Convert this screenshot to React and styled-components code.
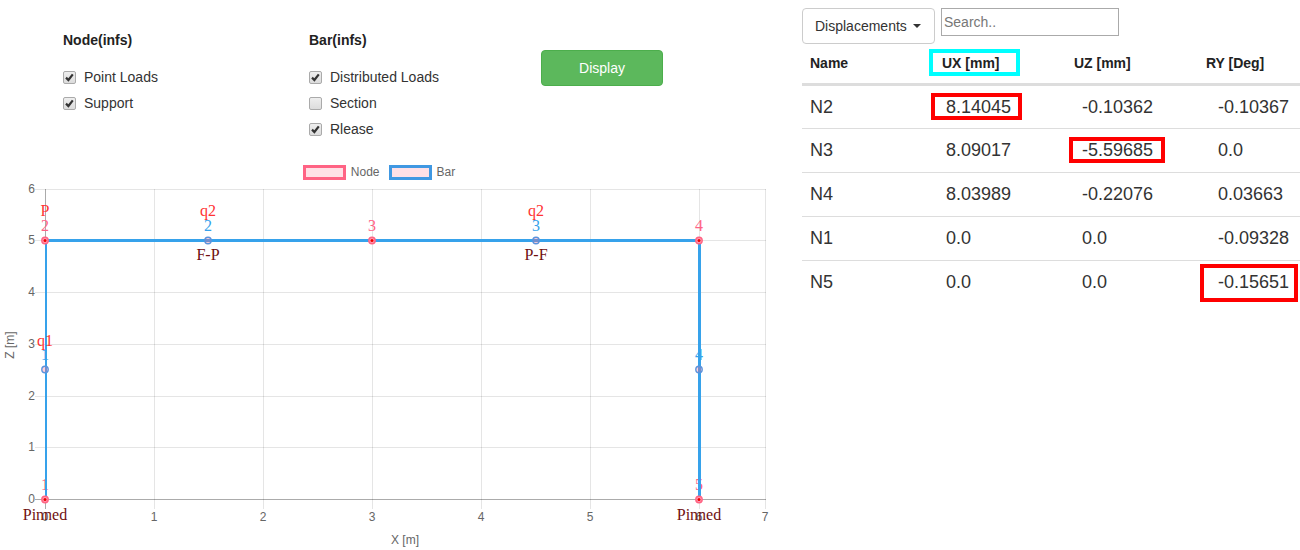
import React, { useState } from "react";
import styled, { createGlobalStyle } from "styled-components";

const GlobalStyle = createGlobalStyle`
  *, *::before, *::after { box-sizing: border-box; }
  body {
    margin: 0;
    background: #fff;
    color: #333;
    font: 14px/20px "Liberation Sans", Arial, sans-serif;
  }
`;

const Page = styled.main`
  display: grid;
  grid-template-columns: minmax(0, 770fr) minmax(0, 498fr);
  column-gap: 32px;
`;

const ModelPanel = styled.section`
  display: flex;
  flex-direction: column;
`;

const Options = styled.form`
  display: grid;
  grid-template-columns: 246fr 232fr 229fr;
  align-items: start;
  padding: 30px 0 20px 63px;
`;

const Group = styled.fieldset`
  display: flex;
  flex-direction: column;
  min-width: 0;
  margin: 0;
  padding: 0;
  border: 0;
`;

const GroupTitle = styled.legend`
  padding: 0;
  margin-bottom: 14px;
  font-weight: bold;
  color: #222;
`;

const Option = styled.label`
  display: grid;
  grid-template-columns: 13px 1fr;
  column-gap: 8px;
  align-items: center;
  line-height: 26px;
`;

const Tick = styled.svg`
  grid-area: 1 / 1;
  width: 13px;
  height: 13px;
  pointer-events: none;
  visibility: hidden;
`;

const Box = styled.input`
  grid-area: 1 / 1;
  appearance: none;
  width: 13px;
  height: 13px;
  margin: 0;
  border: 1px solid #aaa;
  border-radius: 2px;
  background: linear-gradient(#eee, #dcdcdc);

  &:checked + ${Tick} { visibility: visible; }
`;

const DisplayButton = styled.button`
  justify-self: start;
  width: 122px;
  height: 36px;
  margin-top: 20px;
  border: 1px solid #4cae4c;
  border-radius: 4px;
  background: #5cb85c;
  color: #fff;
  font: inherit;
  cursor: pointer;
`;

const Legend = styled.div`
  display: flex;
  justify-content: center;
  gap: 9px;
  padding-right: 12px;
  font-size: 12px;
  color: #666;
`;

const LegendItem = styled.span`
  display: flex;
  align-items: center;
  gap: 5px;
`;

const Swatch = styled.i`
  width: 43px;
  height: 15px;
  border: 3px solid ${(p) => p.$color};
  background: #ffe0e6;
`;

const Chart = styled.svg`
  display: block;
  width: 100%;
  height: auto;
`;

const AxisText = styled.text`
  font: 12px "Liberation Sans", Arial, sans-serif;
  fill: #666;
  text-anchor: ${(p) => p.$anchor || "middle"};
`;

const Mark = styled.text`
  font: 16px "Liberation Serif", "Times New Roman", serif;
  fill: ${(p) => p.$color};
  text-anchor: middle;
`;

const ResultPanel = styled.section`
  display: flex;
  flex-direction: column;
`;

const Toolbar = styled.div`
  display: flex;
  align-items: flex-start;
  gap: 6px;
  padding-top: 8px;
`;

const Picker = styled.div`
  display: grid;
  align-items: center;
  width: 133px;
  height: 36px;
`;

const Select = styled.select`
  grid-area: 1 / 1;
  appearance: none;
  width: 100%;
  height: 36px;
  padding: 0 12px;
  border: 1px solid #ccc;
  border-radius: 4px;
  background: #fff;
  color: #333;
  font: inherit;
`;

const Caret = styled.span`
  grid-area: 1 / 1;
  justify-self: end;
  margin-right: 14px;
  border: 4px solid transparent;
  border-top-color: #333;
  border-bottom: 0;
  pointer-events: none;
`;

const Search = styled.input`
  width: 178px;
  height: 28px;
  padding: 0 2px;
  border: 1px solid #aaa;
  font: inherit;
  color: #333;

  &::placeholder { color: #777; opacity: 1; }
`;

const Table = styled.table`
  width: 100%;
  table-layout: fixed;
  border-collapse: collapse;
`;

const HeadCell = styled.th`
  width: ${(p) => (p.$rest ? "auto" : "26.5%")};
  height: 40px;
  padding: 0 8px;
  border-bottom: 3px solid #ddd;
  color: #222;
  text-align: left;
  white-space: nowrap;
`;

const Cell = styled.td`
  height: 44px;
  padding: 0 0 0 ${(p) => 8 + 4 * p.$column}px;
  border-bottom: 1px solid #ddd;
  font-size: 18px;
  text-align: left;
  white-space: nowrap;

  tr:last-child > & { border-bottom: 0; }
`;

const Highlight = styled.span`
  position: relative;

  &::after {
    content: "";
    position: absolute;
    inset: ${(p) => p.$inset};
    border: 4px solid ${(p) => p.$color || "#f00"};
    pointer-events: none;
  }
`;

const PINK = "#ff6384";
const BLUE = "#36a2eb";
const RED = "#ff3333";
const BROWN = "#701010";

const X_TICKS = [45, 154, 263, 372, 481, 590, 699, 765];
const Y_TICKS = [317, 265, 214, 162, 110, 58, 7];

const NODES = [
  { id: 1, x: 45, y: 317 },
  { id: 2, x: 45, y: 58 },
  { id: 3, x: 372, y: 58 },
  { id: 4, x: 699, y: 58 },
  { id: 5, x: 699, y: 317 },
];

const BARS = [
  { id: 1, x: 45, y: 187 },
  { id: 2, x: 208, y: 58 },
  { id: 3, x: 536, y: 58 },
  { id: 4, x: 699, y: 187 },
];

const LOADS = [
  { label: "P", x: 45, y: 34 },
  { label: "q2", x: 208, y: 34 },
  { label: "q2", x: 536, y: 34 },
  { label: "q1", x: 45, y: 164 },
];

const NOTES = [
  { label: "F-P", x: 208, y: 78 },
  { label: "P-F", x: 536, y: 78 },
  { label: "Pinned", x: 45, y: 338 },
  { label: "Pinned", x: 699, y: 338 },
];

const HEADS = ["Name", "UX [mm]", "UZ [mm]", "RY [Deg]"];

const ROWS = [
  ["N2", "8.14045", "-0.10362", "-0.10367"],
  ["N3", "8.09017", "-5.59685", "0.0"],
  ["N4", "8.03989", "-0.22076", "0.03663"],
  ["N1", "0.0", "0.0", "-0.09328"],
  ["N5", "0.0", "0.0", "-0.15651"],
];

const EXTREMES = {
  "8.14045": "-4px -11px -3px -15px",
  "-5.59685": "-3px -12px -3px -13px",
  "-0.15651": "-8px -9px -10px -18px",
};

function CheckOption({ label, checked }) {
  const [on, setOn] = useState(checked);
  return (
    <Option>
      <Box type="checkbox" checked={on} onChange={(e) => setOn(e.target.checked)} />
      <Tick viewBox="0 0 13 13" aria-hidden="true">
        <path d="M3 6.6 L5.4 9 L9.8 3.4" fill="none" stroke="#333" strokeWidth="2.2" />
      </Tick>
      <span>{label}</span>
    </Option>
  );
}

function FrameChart() {
  return (
    <Chart viewBox="0 0 770 367" role="img" aria-label="Frame geometry">
      <g stroke="#000" strokeOpacity="0.1">
        {X_TICKS.map((x) => (
          <line key={x} x1={x + 0.5} x2={x + 0.5} y1="7" y2="327" />
        ))}
        {Y_TICKS.map((y) => (
          <line key={y} x1="35" x2="766" y1={y + 0.5} y2={y + 0.5} />
        ))}
      </g>
      <g stroke="#000" strokeOpacity="0.25">
        <line x1="45.5" x2="45.5" y1="7" y2="327" />
        <line x1="35" x2="766" y1="317.5" y2="317.5" />
      </g>
      {X_TICKS.map((x, i) => (
        <AxisText key={x} x={x} y="339">{i}</AxisText>
      ))}
      {Y_TICKS.map((y, i) => (
        <AxisText key={y} x="35" y={y + 4} $anchor="end">{i}</AxisText>
      ))}
      <AxisText x="405" y="362">X [m]</AxisText>
      <AxisText transform="translate(14 163) rotate(-90)">Z [m]</AxisText>

      {NODES.map((n) => (
        <Mark key={n.id} x={n.x} y={n.y - 9} $color={PINK}>{n.id}</Mark>
      ))}
      {BARS.map((b) => (
        <Mark key={b.id} x={b.x} y={b.y - 9} $color={BLUE}>{b.id}</Mark>
      ))}
      <g stroke={BLUE} fill="none">
        <line x1="46" x2="46" y1="58" y2="317" strokeWidth="2" />
        <path d="M45 58.5 H699.5 V317" strokeWidth="3" />
      </g>
      {BARS.map((b) => (
        <circle key={b.id} cx={b.x} cy={b.y + 0.5} r="3.2" fill="#ff6384" fillOpacity="0.3" stroke="#5b93dc" strokeWidth="1.4" />
      ))}
      {NODES.map((n) => (
        <g key={n.id}>
          <circle cx={n.x} cy={n.y + 0.5} r="3.2" fill="#ff9db2" stroke={PINK} strokeWidth="1.4" />
          <circle cx={n.x} cy={n.y + 0.5} r="1.5" fill="#f00000" />
        </g>
      ))}
      {LOADS.map((l) => (
        <Mark key={l.label + l.x} x={l.x} y={l.y} $color={RED}>{l.label}</Mark>
      ))}
      {NOTES.map((n) => (
        <Mark key={n.label + n.x} x={n.x} y={n.y} $color={BROWN}>{n.label}</Mark>
      ))}
    </Chart>
  );
}

export default function App() {
  return (
    <>
      <GlobalStyle />
      <Page>
        <ModelPanel>
          <Options onSubmit={(e) => e.preventDefault()}>
            <Group>
              <GroupTitle>Node(infs)</GroupTitle>
              <CheckOption label="Point Loads" checked />
              <CheckOption label="Support" checked />
            </Group>
            <Group>
              <GroupTitle>Bar(infs)</GroupTitle>
              <CheckOption label="Distributed Loads" checked />
              <CheckOption label="Section" checked={false} />
              <CheckOption label="Rlease" checked />
            </Group>
            <DisplayButton type="submit">Display</DisplayButton>
          </Options>
          <Legend>
            <LegendItem><Swatch $color={PINK} />Node</LegendItem>
            <LegendItem><Swatch $color="#4098e2" />Bar</LegendItem>
          </Legend>
          <FrameChart />
        </ModelPanel>
        <ResultPanel>
          <Toolbar>
            <Picker>
              <Select aria-label="Result type">
                <option>Displacements</option>
              </Select>
              <Caret />
            </Picker>
            <Search type="text" placeholder="Search.." aria-label="Search results" />
          </Toolbar>
          <Table>
            <thead>
              <tr>
                {HEADS.map((head, i) => (
                  <HeadCell key={head} scope="col" $rest={i === 3}>
                    {i === 1 ? (
                      <Highlight $color="#0ff" $inset="-6px -20px -5px -13px">{head}</Highlight>
                    ) : head}
                  </HeadCell>
                ))}
              </tr>
            </thead>
            <tbody>
              {ROWS.map((row) => (
                <tr key={row[0]}>
                  {row.map((value, i) => (
                    <Cell key={i} $column={i}>
                      {EXTREMES[value] ? (
                        <Highlight $inset={EXTREMES[value]}>{value}</Highlight>
                      ) : value}
                    </Cell>
                  ))}
                </tr>
              ))}
            </tbody>
          </Table>
        </ResultPanel>
      </Page>
    </>
  );
}
